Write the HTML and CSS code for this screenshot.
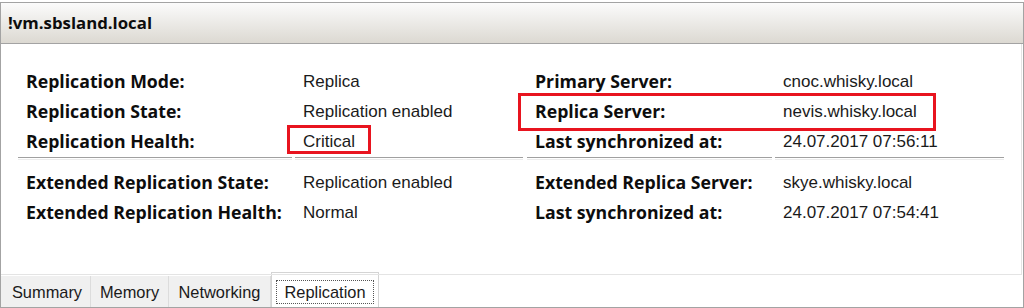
FILE: index.html
```html
<!DOCTYPE html>
<html lang="en">
<head>
    <meta charset="UTF-8">
    <title>!vm.sbsland.local - Replication</title>
    <link rel="stylesheet" href="styles.css">
</head>
<body>

    <div class="vm-window">
        <!-- TITLE -->
        <div class="title-bar">!vm.sbsland.local</div>

        <!-- DETAILS PANE -->
        <div class="details">
            <div class="info-grid">
                <div class="label">Replication Mode:</div>
                <div class="value">Replica</div>
                <div class="label">Primary Server:</div>
                <div class="value">cnoc.whisky.local</div>

                <div class="label">Replication State:</div>
                <div class="value">Replication enabled</div>
                <div class="label">Replica Server:</div>
                <div class="value">nevis.whisky.local</div>

                <div class="label">Replication Health:</div>
                <div class="value">Critical</div>
                <div class="label">Last synchronized at:</div>
                <div class="value">24.07.2017 07:56:11</div>
            </div>

            <div class="divider">
                <span class="seg seg-1"></span>
                <span class="seg seg-2"></span>
                <span class="seg seg-3"></span>
                <span class="seg seg-4"></span>
            </div>

            <div class="info-grid">
                <div class="label">Extended Replication State:</div>
                <div class="value">Replication enabled</div>
                <div class="label">Extended Replica Server:</div>
                <div class="value">skye.whisky.local</div>

                <div class="label">Extended Replication Health:</div>
                <div class="value">Normal</div>
                <div class="label">Last synchronized at:</div>
                <div class="value">24.07.2017 07:54:41</div>
            </div>

            <!-- red annotation boxes -->
            <div class="mark mark-critical"></div>
            <div class="mark mark-replica"></div>
        </div>

        <!-- TABS -->
        <div class="tab-strip">
            <div class="tab tab-summary">Summary</div>
            <div class="tab tab-memory">Memory</div>
            <div class="tab tab-networking">Networking</div>
            <div class="tab tab-replication active"><span class="focus">Replication</span></div>
        </div>
    </div>

</body>
</html>
```

FILE: styles.css
```css
body, html {
    margin: 0;
    padding: 0;
    background-color: white;
    font-family: 'Liberation Sans', Arial, sans-serif;
    color: #1a1a1a;
}

.vm-window {
    margin-top: 2px;
    width: 1024px;
    height: 306px;
    box-sizing: border-box;
    border: 1px solid #a3a3a3;
    display: flex;
    flex-direction: column;
}

.title-bar {
    height: 40px;
    line-height: 40px;
    padding-left: 7px;
    border-bottom: 1px solid #a3a3a3;
    background: linear-gradient(#fbfbfb, #dcd9d2);
    font-family: 'Open Sans', sans-serif;
    font-weight: 700;
    font-size: 16.8px;
    color: #0d0d0d;
}

/* Panel com as informações */
.details {
    position: relative;
    height: 231px;
    box-sizing: border-box;
    margin-right: 1px;
    border-right: 1px solid #e4e4e4;
    border-bottom: 1px solid #e4e4e4;
    padding-top: 22px;
}

.info-grid {
    display: grid;
    grid-template-columns: 277px 232px 248px 1fr;
    padding-left: 25px;
    line-height: 30px;
}

.label {
    font-family: 'Open Sans', sans-serif;
    font-weight: 700;
    font-size: 17.7px;
    color: #0d0d0d;
}

.value {
    font-size: 17px;
    margin-top: 1px;
    margin-bottom: -1px;
}

.divider {
    display: flex;
    padding-left: 17px;
    margin: 1px 0 7px;
}

.seg {
    height: 1px;
    border-top: 1px solid #a0a0a0;
    border-bottom: 1px solid #ececec;
}

.seg-1 { width: 274px; margin-right: 3px; }
.seg-2 { width: 228px; margin-right: 4px; }
.seg-3 { width: 245px; margin-right: 3px; }
.seg-4 { width: 229px; }

.mark {
    position: absolute;
    border: 3px solid #e8141f;
    box-sizing: border-box;
}

.mark-critical {
    left: 286px;
    top: 81px;
    width: 84px;
    height: 29px;
}

.mark-replica {
    left: 517px;
    top: 49px;
    width: 418px;
    height: 38px;
}

/* Abas */
.tab-strip {
    flex: 1;
    display: flex;
    align-items: flex-end;
    font-size: 16.4px;
}

.tab {
    height: 31px;
    box-sizing: border-box;
    background-color: #f0f0f0;
    border-right: 1px solid #dcdcdc;
    display: flex;
    align-items: center;
    justify-content: center;
    padding-top: 2px;
    color: #1a1a1a;
}

.tab-summary { width: 90px; padding-left: 3px; }
.tab-memory { width: 78px; }
.tab-networking { width: 102px; }

.tab.active {
    width: 108px;
    height: 35px;
    margin-top: -3px;
    background-color: white;
    border: 1px solid #d4d4d4;
    border-bottom: none;
    padding-top: 4px;
}

.focus {
    border: 1px dotted #555;
    padding: 2px 7px 1px;
}
```
